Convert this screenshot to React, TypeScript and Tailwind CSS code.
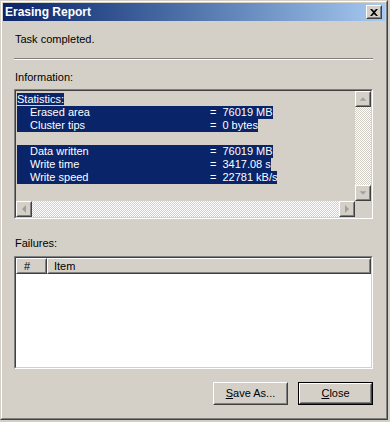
import React from 'react';

type Line = { head?: string; label?: string; value?: string };

const lines: Line[] = [
	{ head: 'Statistics:' },
	{ label: 'Erased area', value: '76019 MB' },
	{ label: 'Cluster tips', value: '0 bytes' },
	{},
	{ label: 'Data written', value: '76019 MB' },
	{ label: 'Write time', value: '3417.08 s' },
	{ label: 'Write speed', value: '22781 kB/s' },
];

function Raised({ className = '', children }: { className?: string; children?: React.ReactNode }) {
	return (
		<div className={`border border-t-white border-l-white border-b-[#404040] border-r-[#404040] ${className}`}>
			<div className="flex h-full w-full items-center justify-center border border-t-[#d4d0c8] border-l-[#d4d0c8] border-b-[#808080] border-r-[#808080]">
				{children}
			</div>
		</div>
	);
}

function Sunken({ className = '', children }: { className?: string; children?: React.ReactNode }) {
	return (
		<div className={`border border-t-[#808080] border-l-[#808080] border-b-white border-r-white ${className}`}>
			<div className="flex h-full w-full flex-col border border-t-[#404040] border-l-[#404040] border-b-[#d4d0c8] border-r-[#d4d0c8]">
				{children}
			</div>
		</div>
	);
}

function Arrow({ dir }: { dir: 'up' | 'down' | 'left' | 'right' }) {
	const pts = {
		up: '4,6 8,2 12,6',
		down: '4,2 8,6 12,2',
		left: '6,4 2,8 6,12',
		right: '2,4 6,8 2,12',
	}[dir];
	const vert = dir === 'up' || dir === 'down';
	return (
		<Raised className="h-[16px] w-[16px] shrink-0 bg-[#d4d0c8]">
			<svg width={vert ? 14 : 8} height={vert ? 8 : 14} viewBox={vert ? '1 0 14 8' : '0 1 8 14'}>
				<polygon points={pts} fill="#a0a0a0" />
			</svg>
		</Raised>
	);
}

const track =
	'bg-[conic-gradient(#ffffff_25%,#d4d0c8_0_50%,#ffffff_0_75%,#d4d0c8_0)] bg-[length:2px_2px]';

export default function App() {
	return (
		<div className="h-[422px] w-[390px] bg-[#d4d0c8] font-['Liberation_Sans',Arial,sans-serif] text-[11px] leading-[13px] text-black">
			<div className="h-[420px] w-[388px] border border-t-[#d4d0c8] border-l-[#d4d0c8] border-b-[#404040] border-r-[#404040]">
				<div className="flex h-full w-full flex-col border border-t-white border-l-white border-b-[#808080] border-r-[#808080] p-px">
					{/* title bar */}
					<div className="flex h-[18px] shrink-0 items-center justify-between bg-linear-to-r from-[#0a246a] to-[#a6caf0] pl-[2px] pr-[3px]">
						<span className="text-[12px] font-bold text-white">Erasing Report</span>
						<Raised className="h-[14px] w-[16px] bg-[#d4d0c8]">
							<svg width="8" height="7" viewBox="0 0 8 7">
								<path d="M0 0h2l2 2 2-2h2L5 3.5 8 7H6L4 5 2 7H0l3-3.5z" fill="#000" />
							</svg>
						</Raised>
					</div>

					<div className="flex flex-1 flex-col pl-[11px] pr-[12px]">
						<div className="mt-[12px] pl-px">Task completed.</div>
						<div className="mt-[12px] h-[2px] border-t border-t-[#808080] border-b border-b-white" />
						<div className="mt-[11px] pl-px">Information:</div>

						<Sunken className="mt-[5px] h-[130px] bg-[#d4d0c8]">
							<div className="flex min-h-0 flex-1">
								<div className="flex-1 overflow-hidden pl-px pt-[2px]">
									{lines.map((l, i) => (
										<div key={i} className="h-[13px]">
											{l.head && <span className="bg-[#0a246a] text-white">{l.head}</span>}
											{l.label && (
												<span className="inline-flex bg-[#0a246a] text-white">
													<span className="w-[13px]" />
													<span className="w-[180px]">{l.label}</span>
													<span>=</span>
													<span className="pl-[6px]">{l.value}</span>
												</span>
											)}
										</div>
									))}
								</div>
								<div className="flex w-[16px] flex-col">
									<Arrow dir="up" />
									<div className={`flex-1 ${track}`} />
									<Arrow dir="down" />
								</div>
							</div>
							<div className="flex h-[16px]">
								<Arrow dir="left" />
								<div className={`flex-1 ${track}`} />
								<Arrow dir="right" />
								<div className="w-[16px] bg-[#d4d0c8]" />
							</div>
						</Sunken>

						<div className="mt-[18px] pl-px">Failures:</div>

						<Sunken className="mt-[6px] h-[113px] bg-white">
							<div className="flex h-[16px]">
								<Raised className="w-[31px] bg-[#d4d0c8]">
									<span className="w-full pl-[6px] text-left">#</span>
								</Raised>
								<Raised className="flex-1 bg-[#d4d0c8]">
									<span className="w-full pl-[5px] text-left">Item</span>
								</Raised>
							</div>
						</Sunken>

						<div className="mt-[13px] flex justify-end gap-[10px]">
							<Raised className="h-[23px] w-[75px] bg-[#d4d0c8]">
								<span>
									<span className="underline">S</span>ave As...
								</span>
							</Raised>
							<div className="h-[23px] w-[75px] border border-black">
								<Raised className="h-full w-full bg-[#d4d0c8]">
									<span>
										<span className="underline">C</span>lose
									</span>
								</Raised>
							</div>
						</div>
					</div>
				</div>
			</div>
		</div>
	);
}
